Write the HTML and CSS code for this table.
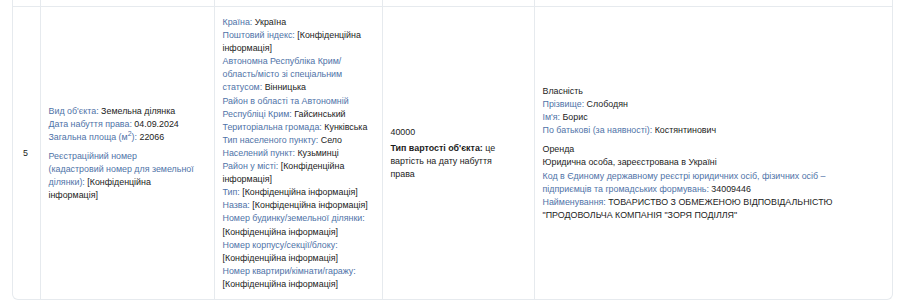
FILE: index.html
```html
<!DOCTYPE html>
<html lang="uk">
<head>
<meta charset="utf-8">
<link rel="stylesheet" href="styles.css">
</head>
<body>
<div class="wrap">
<table class="tbl">
<colgroup>
<col class="c1"><col class="c2"><col class="c3"><col class="c4"><col class="c5">
</colgroup>
<tr class="prev"><td></td><td></td><td></td><td></td><td></td></tr>
<tr class="row">
<td class="num">5</td>
<td class="obj">
  <div class="grp">
    <div><span class="lb">Вид об'єкта:</span> Земельна ділянка</div>
    <div><span class="lb">Дата набуття права:</span> 04.09.2024</div>
    <div><span class="lb">Загальна площа (м<sup>2</sup>):</span> 22066</div>
  </div>
  <div class="grp">
    <div><span class="lb">Реєстраційний номер<br>(кадастровий номер для земельної ділянки):</span> [Конфіденційна інформація]</div>
  </div>
</td>
<td>
  <div><span class="lb">Країна:</span> Україна</div>
  <div><span class="lb">Поштовий індекс:</span> [Конфіденційна інформація]</div>
  <div><span class="lb">Автономна Республіка Крим/ область/місто зі спеціальним статусом:</span> Вінницька</div>
  <div><span class="lb">Район в області та Автономній Республіці Крим:</span> Гайсинський</div>
  <div><span class="lb">Територіальна громада:</span> Кунківська</div>
  <div><span class="lb">Тип населеного пункту:</span> Село</div>
  <div><span class="lb">Населений пункт:</span> Кузьминці</div>
  <div><span class="lb">Район у місті:</span> [Конфіденційна інформація]</div>
  <div><span class="lb">Тип:</span> [Конфіденційна інформація]</div>
  <div><span class="lb">Назва:</span> [Конфіденційна інформація]</div>
  <div><span class="lb">Номер будинку/земельної ділянки:</span> [Конфіденційна інформація]</div>
  <div><span class="lb">Номер корпусу/секції/блоку:</span> [Конфіденційна інформація]</div>
  <div><span class="lb">Номер квартири/кімнати/гаражу:</span> [Конфіденційна інформація]</div>
</td>
<td class="val">
  <div class="grp small">40000</div>
  <div class="grp"><b>Тип вартості об'єкта:</b> це вартість на дату набуття права</div>
</td>
<td class="own">
  <div class="grp">
    <div>Власність</div>
    <div><span class="lb">Прізвище:</span> Слободян</div>
    <div><span class="lb">Ім'я:</span> Борис</div>
    <div><span class="lb">По батькові (за наявності):</span> Костянтинович</div>
  </div>
  <div class="grp">
    <div>Оренда</div>
    <div>Юридична особа, зареєстрована в Україні</div>
    <div><span class="lb">Код в Єдиному державному реєстрі юридичних осіб, фізичних осіб – підприємців та громадських формувань:</span> 34009446</div>
    <div><span class="lb">Найменування:</span> ТОВАРИСТВО З ОБМЕЖЕНОЮ ВІДПОВІДАЛЬНІСТЮ "ПРОДОВОЛЬЧА КОМПАНІЯ "ЗОРЯ ПОДІЛЛЯ"</div>
  </div>
</td>
</tr>
</table>
</div>
</body>
</html>
```
FILE: styles.css
```css
html, body {
  margin: 0;
  padding: 0;
  background: #ffffff;
}
body {
  font-family: "Liberation Sans", Arial, sans-serif;
  font-size: 8.9px;
  line-height: 13.1px;
  color: #1c1c1c;
}
.wrap {
  margin: 0 11px 0 12px;
  border: 1px solid #e6eaee;
  border-top: none;
  border-radius: 0 0 6px 6px;
  overflow: hidden;
}
.tbl {
  width: 100%;
  border-collapse: collapse;
  table-layout: fixed;
}
.c1 { width: 27px; }
.c2 { width: 174px; }
.c3 { width: 168px; }
.c4 { width: 152px; }
.c5 { width: auto; }
.tbl td {
  border-left: 1px solid #e6eaee;
  vertical-align: middle;
  padding: 8px 12px 8px 8px;
}
.tbl td:first-child { border-left: none; }
.prev td {
  height: 6px;
  padding: 0;
  border-bottom: 1px solid #e6eaee;
}
.row td {
  padding-top: 9px;
  padding-bottom: 8px;
}
.tbl td.num {
  padding-left: 10px;
  padding-right: 4px;
}
.tbl td.obj { padding-right: 17px; }
.tbl td.val { padding-right: 20px; }
.tbl td.own { padding-right: 24px; }
.lb { color: #4f73a8; }
.grp + .grp { margin-top: 6px; }
.small + .grp { margin-top: 3px; }
sup {
  font-size: 7px;
  line-height: 0;
}
b { font-weight: bold; }
```
